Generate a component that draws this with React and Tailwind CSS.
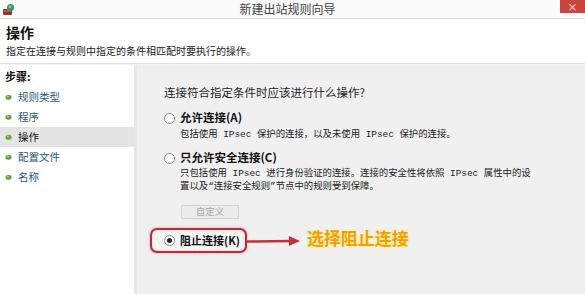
import React from "react";

const steps = [
  { label: "规则类型", active: false },
  { label: "程序", active: false },
  { label: "操作", active: true },
  { label: "配置文件", active: false },
  { label: "名称", active: false },
];

const cjk = "font-['Noto_Sans_CJK_SC','Noto_Sans',sans-serif]";
const mono = "font-['Liberation_Mono','Noto_Sans_CJK_SC',monospace]";

function AppIcon() {
  return (
    <svg width="13" height="13" viewBox="0 0 13 13">
      <rect x="1" y="6" width="9" height="6" rx="1" fill="#8a3a2a" />
      <rect x="2" y="7" width="7" height="2" fill="#b65a44" />
      <circle cx="8.5" cy="4.5" r="3.5" fill="#3f8f6a" />
      <circle cx="8" cy="3.8" r="1.6" fill="#7cc39a" />
    </svg>
  );
}

function Bullet() {
  return (
    <svg width="7" height="6" viewBox="0 0 7 6">
      <ellipse cx="3.5" cy="3.2" rx="3" ry="2.5" fill="#5f9a3a" />
      <ellipse cx="3" cy="2.5" rx="1.4" ry="1" fill="#a8d27a" />
    </svg>
  );
}

function Radio({ checked }) {
  return (
    <span className="flex h-[11px] w-[11px] shrink-0 items-center justify-center rounded-full border border-[#8a8a8a] bg-white">
      {checked && <span className="h-[5px] w-[5px] rounded-full bg-[#222]" />}
    </span>
  );
}

function Arrow() {
  return (
    <svg width="54" height="12" viewBox="0 0 54 12" className="shrink-0">
      <line x1="0" y1="6.5" x2="44" y2="6" stroke="#c2303c" strokeWidth="2.5" />
      <polygon points="42,1 53,6 42,11" fill="#c2303c" />
    </svg>
  );
}

export default function App() {
  return (
    <div className={`flex h-[294px] w-[585px] flex-col overflow-hidden bg-white text-[#1e1e1e] ${cjk}`}>
      {/* title bar */}
      <div className="relative flex h-[19px] shrink-0 items-center border-b border-[#d8d8d8] bg-[#fafafa]">
        <div className="pl-[2px]">
          <AppIcon />
        </div>
        <div className="flex-1 text-center text-[12px] leading-none text-[#444]">新建出站规则向导</div>
        <div className="flex h-[13px] w-[25px] items-center justify-center self-start bg-[#c8453d] text-[10px] leading-none text-white">
          ×
        </div>
      </div>

      {/* header */}
      <div className="flex h-[45px] shrink-0 flex-col border-b border-[#e2e2e2] bg-white pl-[6px]">
        <div className="mt-[3px] text-[14px] font-bold leading-[20px] text-[#111]">操作</div>
        <div className="mt-[2px] text-[10px] leading-[14px] text-[#222]">指定在连接与规则中指定的条件相匹配时要执行的操作。</div>
      </div>

      {/* body */}
      <div className="flex flex-1 border-t border-[#f3f3f3]">
        {/* steps */}
        <div className="w-[137px] shrink-0 border-r-[3px] border-[#e6e6e6] bg-white pt-[4px]">
          <div className="pl-[5px] text-[11px] font-bold leading-[14px] text-[#111]">步骤:</div>
          <div className="mt-[4px] flex flex-col">
            {steps.map((s) => (
              <div
                key={s.label}
                className={`flex h-[20px] items-center gap-[6px] pl-[5px] text-[10.5px] ${
                  s.active ? "bg-[#e4e4e4] text-[#111]" : "text-[#2b5878]"
                }`}
              >
                <Bullet />
                <span>{s.label}</span>
              </div>
            ))}
          </div>
        </div>

        {/* options */}
        <div className="flex flex-1 flex-col bg-[#f0f0f0] pl-[27px] pt-[19px]">
          <div className="text-[11.5px] leading-[16px] text-[#1e1e1e]">连接符合指定条件时应该进行什么操作?</div>

          <div className="mt-[10px] flex h-[16px] items-center gap-[5px]">
            <Radio />
            <span className="text-[11.5px] font-bold text-[#111]">允许连接(A)</span>
          </div>
          <div className={`mt-[2px] whitespace-nowrap pl-[16px] text-[9.4px] leading-[13px] text-[#222] ${mono}`}>
            包括使用 IPsec 保护的连接，以及未使用 IPsec 保护的连接。
          </div>

          <div className="mt-[9px] flex h-[16px] items-center gap-[5px]">
            <Radio />
            <span className="text-[11.5px] font-bold text-[#111]">只允许安全连接(C)</span>
          </div>
          <div className={`mt-[1px] flex flex-col whitespace-nowrap pl-[16px] text-[9.4px] leading-[13px] text-[#222] ${mono}`}>
            <span>只包括使用 IPsec 进行身份验证的连接。连接的安全性将依照 IPsec 属性中的设</span>
            <span>置以及“连接安全规则”节点中的规则受到保障。</span>
          </div>

          <div className="ml-[17px] mt-[12px] flex h-[14px] w-[58px] items-center justify-center border border-[#d4d4d4] bg-[#ececec] text-[9.5px] leading-none text-[#a8a8a8]">
            自定义
          </div>

          <div className="-ml-[14px] mt-[9px] flex items-center">
            <div className="flex h-[25px] items-center gap-[5px] whitespace-nowrap rounded-[7px] border-2 border-[#b3303e] bg-[#f4f4f4] pl-[12px] pr-[5px] shadow-[0_0_3px_#e48f98,inset_0_0_2px_#e9a5ab]">
              <Radio checked />
              <span className="text-[11px] font-bold text-[#111]">阻止连接(K)</span>
            </div>
            <Arrow />
            <span className="ml-[6px] -mt-[7px] whitespace-nowrap text-[17px] font-bold leading-none text-[#f2a000] [text-shadow:0_0_3px_#ffe98a,0_0_2px_#fff1a8]">
              选择阻止连接
            </span>
          </div>
        </div>
      </div>
    </div>
  );
}
